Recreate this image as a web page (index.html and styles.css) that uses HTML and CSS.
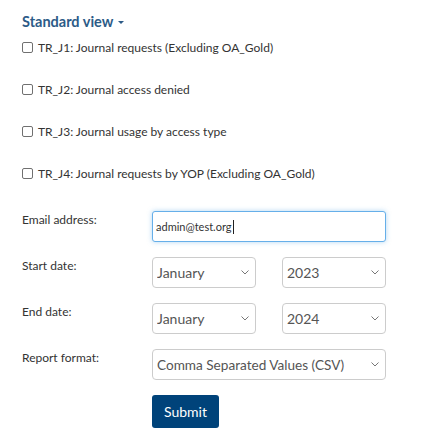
FILE: index.html
```html
<!DOCTYPE html>
<html>
<head>
<meta charset="utf-8">
<link rel="stylesheet" href="styles.css">
</head>
<body>
<div class="page">
  <h3 class="view-title">Standard view <span class="caret"></span></h3>
  <ul class="reports">
    <li><label><input type="checkbox" class="check"> TR_J1: Journal requests (Excluding OA_Gold)</label></li>
    <li><label><input type="checkbox" class="check"> TR_J2: Journal access denied</label></li>
    <li><label><input type="checkbox" class="check"> TR_J3: Journal usage by access type</label></li>
    <li><label><input type="checkbox" class="check"> TR_J4: Journal requests by YOP (Excluding OA_Gold)</label></li>
  </ul>
  <form class="form-grid">
    <label class="field-label">Email address:</label>
    <div class="control"><div class="input-wrap"><input class="text-input focused" type="text" value="admin@test.org"><span class="fake-caret"></span></div></div>

    <label class="field-label">Start date:</label>
    <div class="control pair">
      <div class="select-wrap"><select class="select"><option>January</option></select><svg class="chev" viewBox="0 0 8 5" width="8" height="5"><path d="M0.5 0.5 L4 4 L7.5 0.5" fill="none" stroke="#777" stroke-width="1"/></svg></div>
      <div class="select-wrap"><select class="select"><option>2023</option></select><svg class="chev" viewBox="0 0 8 5" width="8" height="5"><path d="M0.5 0.5 L4 4 L7.5 0.5" fill="none" stroke="#777" stroke-width="1"/></svg></div>
    </div>

    <label class="field-label">End date:</label>
    <div class="control pair">
      <div class="select-wrap"><select class="select"><option>January</option></select><svg class="chev" viewBox="0 0 8 5" width="8" height="5"><path d="M0.5 0.5 L4 4 L7.5 0.5" fill="none" stroke="#777" stroke-width="1"/></svg></div>
      <div class="select-wrap"><select class="select"><option>2024</option></select><svg class="chev" viewBox="0 0 8 5" width="8" height="5"><path d="M0.5 0.5 L4 4 L7.5 0.5" fill="none" stroke="#777" stroke-width="1"/></svg></div>
    </div>

    <label class="field-label">Report format:</label>
    <div class="control">
      <div class="select-wrap"><select class="select wide"><option>Comma Separated Values (CSV)</option></select><svg class="chev" viewBox="0 0 8 5" width="8" height="5"><path d="M0.5 0.5 L4 4 L7.5 0.5" fill="none" stroke="#777" stroke-width="1"/></svg></div>
    </div>

    <span></span>
    <div class="control"><button type="button" class="submit">Submit</button></div>
  </form>
</div>
</body>
</html>
```

FILE: styles.css
```css
* { box-sizing: border-box; }
html, body { margin: 0; padding: 0; background: #fff; }
body {
  font-family: Lato, "Noto Sans", sans-serif;
  color: #333;
  font-size: 12px;
}
.page {
  padding: 12px 0 0 22px;
  width: 386px;
}
.view-title {
  margin: 0;
  height: 20px;
  line-height: 20px;
  font-size: 14.5px;
  font-weight: 700;
  color: #2c5b87;
  display: flex;
  align-items: center;
}
.caret {
  display: inline-block;
  margin-left: 5px;
  width: 0;
  height: 0;
  border-left: 3px solid transparent;
  border-right: 3px solid transparent;
  border-top: 3px solid #2c5b87;
  margin-top: 1px;
}
.reports {
  list-style: none;
  margin: 7px 0 0;
  padding: 0;
  display: flex;
  flex-direction: column;
  gap: 26px;
}
.reports li {
  height: 16px;
  display: flex;
  align-items: center;
}
.reports label {
  display: flex;
  align-items: center;
  font-size: 12px;
}
.check {
  appearance: none;
  -webkit-appearance: none;
  width: 11px;
  height: 11px;
  margin: 0 5px 0 0;
  border: 1px solid #707070;
  border-radius: 2px;
  background: #fff;
}
.form-grid {
  display: grid;
  grid-template-columns: 130px 234px;
  row-gap: 15px;
  margin-top: 30px;
}
.field-label {
  padding-top: 1px;
  line-height: 16px;
  font-size: 12px;
  color: #333;
}
.control { display: flex; }
.pair { justify-content: space-between; }
.pair .select-wrap { width: 104px; }
.control > .select-wrap:only-child { width: 234px; }
.input-wrap {
  position: relative;
  width: 234px;
  height: 31px;
}
.text-input {
  width: 234px;
  height: 31px;
  border: 1px solid #ccc;
  border-radius: 3px;
  padding: 0 3px;
  font-family: inherit;
  font-size: 11px;
  color: #333;
  outline: none;
}
.text-input.focused {
  border-color: #66afe9;
  box-shadow: 0 0 5px rgba(102, 175, 233, 0.5);
}
.fake-caret {
  position: absolute;
  left: 81px;
  top: 9px;
  width: 1px;
  height: 14px;
  background: #222;
}
.select-wrap {
  position: relative;
  height: 31px;
}
.select {
  appearance: none;
  -webkit-appearance: none;
  width: 100%;
  height: 31px;
  border: 1px solid #ccc;
  border-radius: 4px;
  background: #fff;
  padding: 0 4px;
  font-family: inherit;
  font-size: 14px;
  color: #555;
}
.select.wide { font-size: 13.6px; }
.chev {
  position: absolute;
  right: 7px;
  top: 13px;
  pointer-events: none;
}
.submit {
  width: 67px;
  height: 33px;
  background: #00437a;
  color: #fff;
  border: none;
  border-radius: 3px;
  font-family: inherit;
  font-size: 14px;
  padding: 0;
}
```
